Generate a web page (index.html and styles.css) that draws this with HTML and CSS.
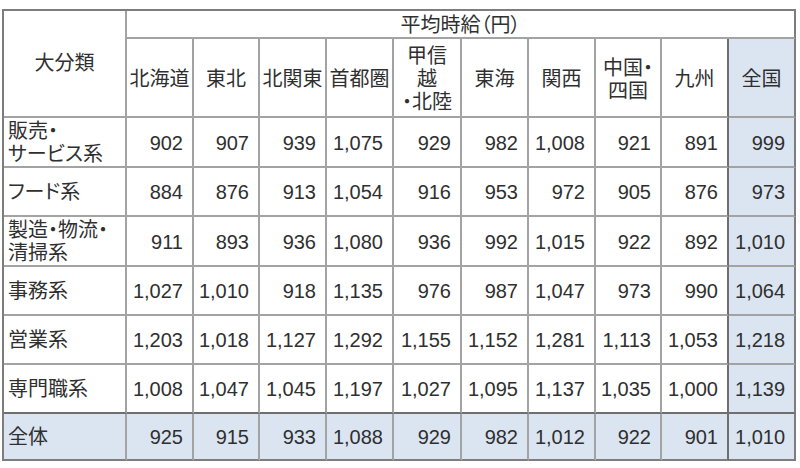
FILE: index.html
```html
<!DOCTYPE html>
<html lang="ja">
<head>
<meta charset="utf-8">
<title>平均時給</title>
<link rel="stylesheet" href="styles.css">
</head>
<body>
<table class="wage">
  <colgroup>
    <col class="c-label">
    <col class="c67"><col class="c66"><col class="c67"><col class="c67"><col class="c68">
    <col class="c67"><col class="c67"><col class="c66"><col class="c67"><col class="c67">
  </colgroup>
  <thead>
    <tr class="h1">
      <th rowspan="2" class="corner">大分類</th>
      <th colspan="10" class="title">平均時給（円）</th>
    </tr>
    <tr class="h2">
      <th>北海道</th>
      <th>東北</th>
      <th>北関東</th>
      <th>首都圏</th>
      <th>甲信<br>越<br>・北陸</th>
      <th>東海</th>
      <th>関西</th>
      <th>中国・<br>四国</th>
      <th class="pre">九州</th>
      <th class="all">全国</th>
    </tr>
  </thead>
  <tbody>
    <tr class="r">
      <th>販売・<br>サービス系</th>
      <td>902</td><td>907</td><td>939</td><td>1,075</td><td>929</td><td>982</td><td>1,008</td><td>921</td><td class="pre">891</td><td class="all">999</td>
    </tr>
    <tr class="r">
      <th>フード系</th>
      <td>884</td><td>876</td><td>913</td><td>1,054</td><td>916</td><td>953</td><td>972</td><td>905</td><td class="pre">876</td><td class="all">973</td>
    </tr>
    <tr class="r">
      <th>製造・物流・<br>清掃系</th>
      <td>911</td><td>893</td><td>936</td><td>1,080</td><td>936</td><td>992</td><td>1,015</td><td>922</td><td class="pre">892</td><td class="all">1,010</td>
    </tr>
    <tr class="r">
      <th>事務系</th>
      <td>1,027</td><td>1,010</td><td>918</td><td>1,135</td><td>976</td><td>987</td><td>1,047</td><td>973</td><td class="pre">990</td><td class="all">1,064</td>
    </tr>
    <tr class="r">
      <th>営業系</th>
      <td>1,203</td><td>1,018</td><td>1,127</td><td>1,292</td><td>1,155</td><td>1,152</td><td>1,281</td><td>1,113</td><td class="pre">1,053</td><td class="all">1,218</td>
    </tr>
    <tr class="r before-total">
      <th>専門職系</th>
      <td>1,008</td><td>1,047</td><td>1,045</td><td>1,197</td><td>1,027</td><td>1,095</td><td>1,137</td><td>1,035</td><td class="pre">1,000</td><td class="all">1,139</td>
    </tr>
    <tr class="r total">
      <th>全体</th>
      <td>925</td><td>915</td><td>933</td><td>1,088</td><td>929</td><td>982</td><td>1,012</td><td>922</td><td class="pre">901</td><td class="all">1,010</td>
    </tr>
  </tbody>
</table>
</body>
</html>
```

FILE: styles.css
```css
* {
  box-sizing: border-box;
}

html, body {
  margin: 0;
  padding: 0;
  background: #ffffff;
}

body {
  font-family: "Liberation Sans", "Noto Sans CJK JP", sans-serif;
  color: #2f2f2f;
}

.wage {
  margin: 9px 0 0 2px;
  width: 794px;
  table-layout: fixed;
  border-collapse: separate;
  border-spacing: 0;
  border-top: 2px solid #7d7d7d;
  border-left: 2px solid #7d7d7d;
  font-size: 20px;
  line-height: 23px;
  font-feature-settings: "palt";
}

.c-label { width: 123px; }
.c66 { width: 66px; }
.c67 { width: 67px; }
.c68 { width: 68px; }

.wage th,
.wage td {
  padding: 0;
  border-right: 2px solid #a3a3a3;
  border-bottom: 2px solid #a3a3a3;
  vertical-align: middle;
  font-weight: normal;
  white-space: nowrap;
}

.wage thead th {
  text-align: center;
}

.wage .title {
  border-right-color: #7d7d7d;
  height: 28px;
  padding-top: 3px;
}

.h2 th {
  height: 79px;
  padding-top: 4px;
}

.corner {
  padding-top: 6px;
}

.r th,
.r td {
  height: 49px;
  padding-top: 2px;
}

.r th {
  text-align: left;
  padding-left: 4px;
}

.r td {
  text-align: right;
  padding-right: 9px;
}

.wage .pre {
  border-right-color: #6f6f6f;
}

.wage .all {
  background: #dbe5f1;
  border-right-color: #7d7d7d;
}

.before-total th,
.before-total td {
  border-bottom-color: #6f6f6f;
}

.wage .total th,
.wage .total td {
  height: 47px;
  background: #dbe5f1;
  border-bottom-color: #7d7d7d;
}
```
